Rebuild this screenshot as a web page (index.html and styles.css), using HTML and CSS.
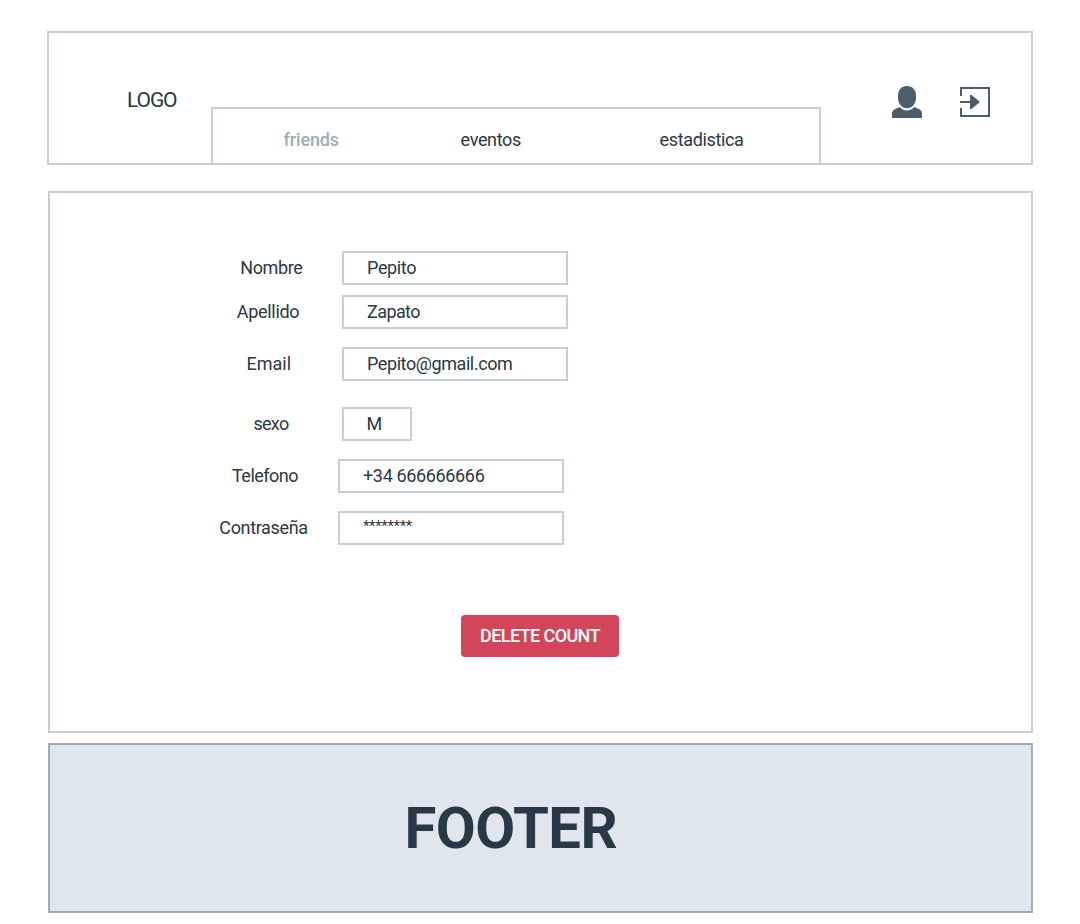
FILE: index.html
```html
<!DOCTYPE html>
<html lang="es">
<head>
<meta charset="utf-8">
<title>Perfil</title>
<link rel="stylesheet" href="styles.css">
</head>
<body>
<header class="header">
  <div class="logo">LOGO</div>
  <nav class="tabs">
    <a class="tab tab-friends">friends</a>
    <a class="tab tab-eventos">eventos</a>
    <a class="tab tab-stats">estadistica</a>
  </nav>
  <div class="actions">
    <svg class="icon-user" width="30" height="33" viewBox="0 0 30 33"><path d="M15 0C9.500 0 6 4 6 9.600V12c0 5.600 3.800 10.200 9 10.200S24 17.600 24 12V9.600C24 4 20.500 0 15 0Z"/><path d="M7.700 21C9.500 23.200 12 24.400 15 24.400S20.500 23.200 22.300 21L26.800 23C29 24 30 25.500 30 28V32H0V28C0 25.500 1 24 3.200 23Z"/></svg>
    <svg class="icon-exit" width="30" height="30" viewBox="0 0 30 30"><path d="M0 0H30V30H0V21H2V28H28V2H2V9H0Z"/><path d="M0 14H10V8H11.500L20 15L11.500 22H10V16H0Z"/></svg>
  </div>
</header>

<main class="panel">
  <form class="form">
    <div class="row nombre"><span class="label">Nombre</span><span class="field">Pepito</span></div>
    <div class="row apellido"><span class="label">Apellido</span><span class="field">Zapato</span></div>
    <div class="row email"><span class="label">Email</span><span class="field">Pepito@gmail.com</span></div>
    <div class="row sexo"><span class="label">sexo</span><span class="field">M</span></div>
    <div class="row telefono"><span class="label">Telefono</span><span class="field">+34 666666666</span></div>
    <div class="row contrasena"><span class="label">Contraseña</span><span class="field">********</span></div>
  </form>
  <button class="delete" type="button">DELETE COUNT</button>
</main>

<footer class="footer">FOOTER</footer>
</body>
</html>
```

FILE: styles.css
```css
* { box-sizing: border-box; }

body {
  margin: 0;
  padding: 31px 47px 11px;
  background: #fff;
  color: #293845;
  font: 18px/30px Roboto, "Noto Sans", sans-serif;
  letter-spacing: -0.35px;
}

.header {
  display: flex;
  width: 986px;
  height: 134px;
  border: 2px solid #c3cfd9;
}

.logo {
  width: 162px;
  padding: 52px 0 0 78px;
  font-size: 21px;
  letter-spacing: -1.1px;
}

.tabs {
  display: flex;
  width: 610px;
  height: 56px;
  margin-top: 74px;
  padding: 16px 0 0 70.600px;
  border: 2px solid #c3cfd9;
  border-bottom: 0;
}

.tab-friends {
  width: 177px;
  color: #9eacb9;
  font-weight: 500;
  letter-spacing: -0.15px;
}

.tab-eventos { width: 199px; }

.actions {
  display: flex;
  align-items: flex-start;
  gap: 38px;
  padding: 53px 0 0 71px;
  fill: #4b5c6b;
}

.icon-exit { margin-top: 1px; }

.panel {
  width: 985px;
  height: 542px;
  margin: 26px 0 0 1px;
  padding: 58px 0 0 169px;
  border: 2px solid #c3cfd9;
}

.form { margin: 0; }

.row { display: flex; }

.label { width: 123px; padding-top: 2px; }

.field {
  width: 226px;
  height: 34px;
  padding-left: 23px;
  border: 2px solid #c3cfd9;
}

.nombre .label { padding-left: 21.200px; }
.apellido { margin-top: 10px; }
.apellido .label { padding-left: 17.800px; letter-spacing: -0.3px; }
.apellido .field { letter-spacing: -0.6px; }
.email { margin-top: 18px; }
.email .label { padding-left: 27.500px; letter-spacing: 0; }
.email .field { letter-spacing: -0.42px; }
.sexo { margin-top: 26px; }
.sexo .label { padding-left: 34.400px; letter-spacing: -0.7px; }
.sexo .field { width: 70px; padding-left: 22.500px; }
.telefono { margin-top: 18px; }
.telefono .label { width: 119px; padding-left: 13px; letter-spacing: -0.5px; }
.contrasena { margin-top: 18px; }
.contrasena .label { width: 119px; padding-left: 0.300px; }
.contrasena .field { font-size: 15px; line-height: 27px; }

.delete {
  display: block;
  width: 158px;
  height: 42px;
  margin: 70px 0 0 242px;
  padding: 0;
  border: 0;
  border-radius: 4px;
  background: #d3455b;
  color: #fff;
  font: 500 18px/42px Roboto, "Noto Sans", sans-serif;
  letter-spacing: -0.6px;
}

.footer {
  width: 985px;
  height: 170px;
  margin: 10px 0 0 1px;
  padding-left: 354.500px;
  border: 2px solid #9eacb9;
  background: #dfe6ee;
  font-size: 58px;
  font-weight: 700;
  line-height: 166px;
  letter-spacing: -0.500px;
}
```
